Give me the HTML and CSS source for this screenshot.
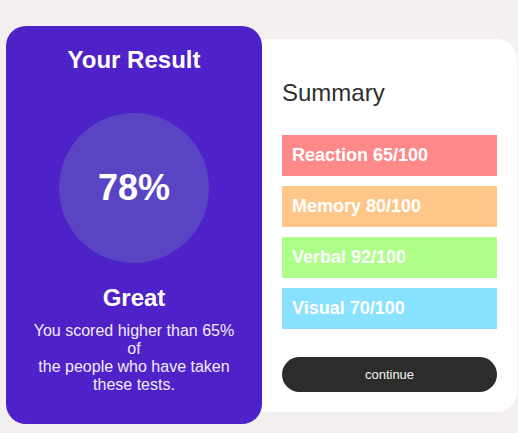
FILE: index.html
```html
<!DOCTYPE html>
<html lang="en">
<head>
<meta charset="utf-8">
<title>Results summary</title>
<link rel="stylesheet" href="styles.css">
</head>
<body>
<main class="page">
  <section class="result">
    <h1 class="result-title">Your Result</h1>
    <div class="score"><span class="score-value">78%</span></div>
    <h2 class="result-grade">Great</h2>
    <p class="result-text">You scored higher than 65% of<br>the people who have taken these tests.</p>
  </section>
  <section class="summary">
    <h2 class="summary-title">Summary</h2>
    <ul class="summary-list">
      <li class="item item-reaction">Reaction 65/100</li>
      <li class="item item-memory">Memory 80/100</li>
      <li class="item item-verbal">Verbal 92/100</li>
      <li class="item item-visual">Visual 70/100</li>
    </ul>
    <button class="continue">continue</button>
  </section>
</main>
</body>
</html>
```

FILE: styles.css
```css
* { box-sizing: border-box; }
html, body { margin: 0; padding: 0; }
body {
  background: #f4f0ef;
  font-family: "Liberation Sans", Arial, sans-serif;
  width: 518px;
  height: 433px;
  overflow: hidden;
}
.page {
  display: flex;
  align-items: center;
  padding: 26px 0 0 6px;
}
.result {
  position: relative;
  z-index: 1;
  flex: 0 0 256px;
  height: 398px;
  background: #4f21c9;
  border-radius: 20px;
  color: #fff;
  text-align: center;
  padding: 20px 24px 0;
  display: flex;
  flex-direction: column;
  align-items: center;
}
.result-title {
  margin: 0;
  font-size: 24px;
  font-weight: 700;
}
.score {
  margin-top: 39px;
  width: 150px;
  height: 150px;
  border-radius: 50%;
  background: #5945c3;
  display: flex;
  align-items: center;
  justify-content: center;
}
.score-value {
  font-size: 36px;
  font-weight: 700;
}
.result-grade {
  margin: 21px 0 0;
  font-size: 24px;
  font-weight: 700;
}
.result-text {
  margin: 10px 0 0;
  font-size: 16px;
  color: #f1ecff;
}
.summary {
  flex: 0 0 275px;
  margin-left: -20px;
  height: 373px;
  background: #fff;
  border-radius: 20px;
  padding: 40px 20px 20px 40px;
  display: flex;
  flex-direction: column;
}
.summary-title {
  margin: 0;
  font-size: 24px;
  font-weight: 400;
  color: #2f2f2f;
}
.summary-list {
  list-style: none;
  margin: 28px 0 0;
  padding: 0;
  display: flex;
  flex-direction: column;
  gap: 10px;
}
.item {
  height: 41px;
  display: flex;
  align-items: center;
  padding-left: 10px;
  color: #fff;
  font-size: 18px;
  font-weight: 700;
}
.item-reaction { background: #ff8989; }
.item-memory { background: #ffc689; }
.item-verbal { background: #adff89; }
.item-visual { background: #89e2ff; }
.continue {
  margin-top: 28px;
  height: 35px;
  border: 0;
  border-radius: 18px;
  background: #2e2c2b;
  color: #f4f4f4;
  font-family: "Liberation Sans", Arial, sans-serif;
  font-size: 13px;
  padding: 0;
}
```
